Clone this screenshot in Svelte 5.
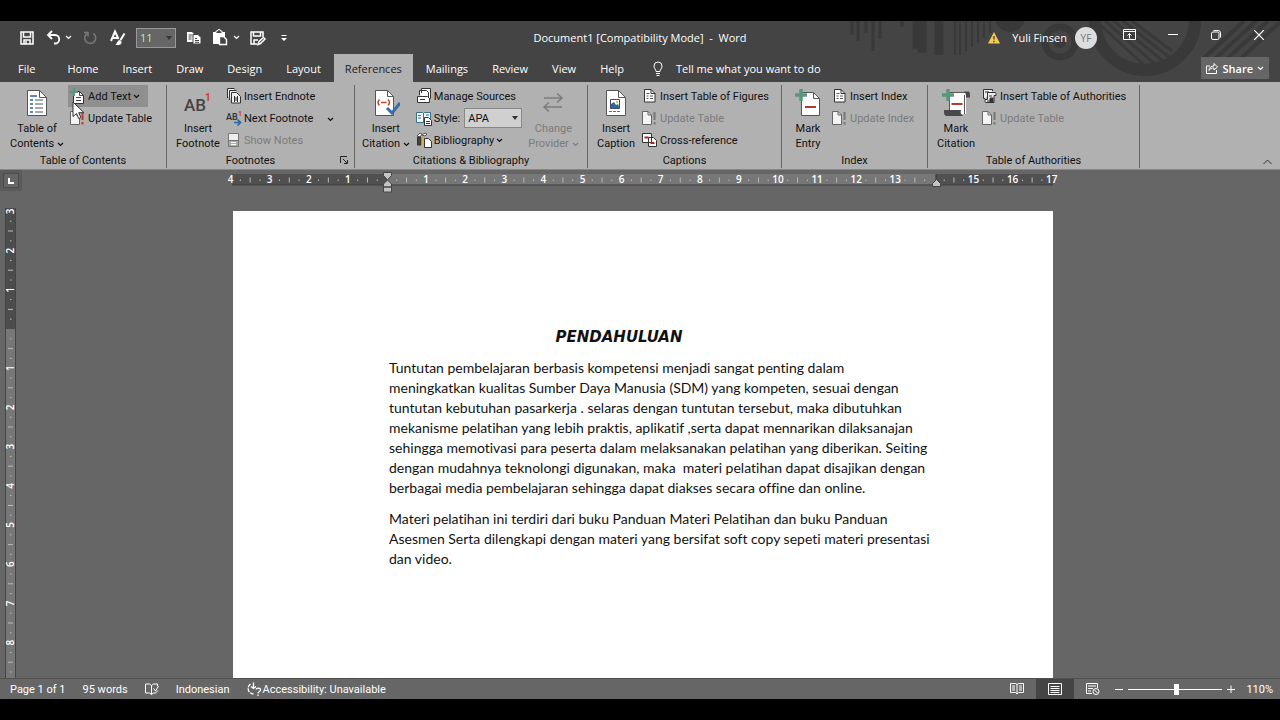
<script lang="ts">
  let zoom = 110;
  let fontSize = '11';
  let citationStyle = 'APA';

  const tabs = ['File', 'Home', 'Insert', 'Draw', 'Design', 'Layout', 'References', 'Mailings', 'Review', 'View', 'Help'];
  let activeTab = 'References';

  // one centimetre on the rulers at 110%
  const unit = 39.1;
  const left = 154;

  const hTicks: { x: number; kind: string; label: string }[] = [];
  for (let i = -16; i <= 68; i++) {
    const n = Math.abs(i / 4);
    if (i === 0 || i === 56) continue;
    const kind = i % 4 === 0 ? 'num' : i % 2 === 0 ? 'line' : 'dot';
    hTicks.push({ x: left + (i * unit) / 4, kind, label: String(n) });
  }

  const vTicks: { y: number; kind: string; label: string }[] = [];
  for (let i = -12; i <= 35; i++) {
    if (i === 0) continue;
    const kind = i % 4 === 0 ? 'num' : i % 2 === 0 ? 'line' : 'dot';
    vTicks.push({ y: 121 + (i * 39.2) / 4, kind, label: String(Math.abs(i / 4)) });
  }

  const first = [
    'Tuntutan pembelajaran berbasis kompetensi menjadi sangat penting dalam',
    'meningkatkan kualitas Sumber Daya Manusia (SDM) yang kompeten, sesuai dengan',
    'tuntutan kebutuhan pasarkerja . selaras dengan tuntutan tersebut, maka dibutuhkan',
    'mekanisme pelatihan yang lebih praktis, aplikatif ,serta dapat mennarikan dilaksanajan',
    'sehingga memotivasi para peserta dalam melaksanakan pelatihan yang diberikan. Seiting',
    'dengan mudahnya teknolongi digunakan, maka  materi pelatihan dapat disajikan dengan',
    'berbagai media pembelajaran sehingga dapat diakses secara offine dan online.'
  ];
  const second = [
    'Materi pelatihan ini terdiri dari buku Panduan Materi Pelatihan dan buku Panduan',
    'Asesmen Serta dilengkapi dengan materi yang bersifat soft copy sepeti materi presentasi',
    'dan video.'
  ];
</script>

{#snippet chevron()}
  <svg class="chevron" width="7" height="5" viewBox="0 0 7 5"><path d="M1 1l2.5 2.5L6 1" fill="none" stroke="currentColor" stroke-width="1.2" /></svg>
{/snippet}

{#snippet updateIcon(color: string)}
  <svg width="16" height="16" viewBox="0 0 16 16">
    <path d="M.5 1.500h5.500l3.500 3.500v9.500h-9z" fill="#f4f4f4" stroke="#666" />
    <path d="M6 1.500v3.500h3.500" fill="none" stroke="#666" />
    <path d="M12.500 2v8M12.500 12v2.500" stroke={color} stroke-width="2" />
  </svg>
{/snippet}

{#snippet pageIcon()}
  <svg width="16" height="16" viewBox="0 0 16 16">
    <path d="M2.500 1.500h6.500l4 4v8.500h-10.500z" fill="#fff" stroke="#333" />
    <path d="M9 1.500v4h4" fill="none" stroke="#333" />
    <path d="M4.500 5.500h3M4.500 8h2M8 8h3M4.500 10.500h2M8 10.500h3" stroke="#555" />
  </svg>
{/snippet}

<div class="app">
  <header>
    <svg class="decor" width="460" height="61" viewBox="0 0 460 61">
      <g stroke="#393939" fill="none">
        <path d="M32 0v14M38 0v20M46 0v12M53 0v30M60 0v18M82 0v6" stroke-width="3" />
        <path d="M97 0v28M102 0v32M119 0v34" stroke-width="9" />
        <path d="M135 0v34M140 0v34M146 0v30M152 0v26M158 0v22M164 0v17M170 0v12" stroke-width="2" />
        <circle cx="240" cy="21" r="15" stroke-width="7" />
        <circle cx="325" cy="-1" r="50" stroke-width="12" />
        <path d="M276 0l50 46M285 0l50 43M294 0l49 40M303 0l46 36M312 0l40 30" stroke-width="3" />
        <path d="M436 0l-52 48M424 0l-40 37M448 0l-50 46M460 1l-46 43" stroke-width="4" />
      </g>
      <circle cx="190" cy="-4" r="15" fill="#393939" />
      <circle cx="240" cy="21" r="6" fill="#393939" />
    </svg>

    <div class="titlebar">
      <div class="quick">
        <button aria-label="Save">
          <svg width="16" height="16" viewBox="0 0 16 16" fill="none" stroke="#fff" stroke-width="1.500"><path d="M2 2h12v12H2zM4.500 2v5h7V2M5 14v-4h6v4M7 11v3" /></svg>
        </button>
        <button class="split" aria-label="Undo">
          <svg width="16" height="16" viewBox="0 0 16 16" fill="none" stroke="#fff" stroke-width="1.800"><path d="M7 1L3 5l4 4M3.500 5H10a4 4 0 0 1 0 8.500H9" /></svg>
          {@render chevron()}
        </button>
        <button aria-label="Redo" disabled>
          <svg width="16" height="16" viewBox="0 0 16 16" fill="none" stroke="#777" stroke-width="1.600"><path d="M5 3.500a5.500 5.500 0 1 0 6.500 0M2 2.500h4v4" /></svg>
        </button>
        <button aria-label="Format">
          <svg width="18" height="17" viewBox="0 0 18 17" fill="none" stroke="#fff" stroke-width="2"><path d="M3 12L7 2.500 10.500 10M5 9h5M16.500 4.500l-4 6.500" /><path d="M7 16c2 0 2-5 5-5 3 1.500 1.500 5-1.500 5z" fill="#fff" stroke="none" /></svg>
        </button>
        <label class="size">
          <select bind:value={fontSize} aria-label="Font size"><option>11</option></select>
        </label>
        <button aria-label="Copy">
          <svg width="16" height="16" viewBox="0 0 16 16"><path d="M1 2h5l2 2v8H1z" fill="#fff" /><path d="M7 4.500h5l3 3v6.500H7z" fill="#fff" stroke="#444" /><path d="M2.500 5h4M2.500 7h3M2.500 9h3M9 8.500h2M9 10.500h4M9 12.300h4" stroke="#444" /></svg>
        </button>
        <button class="split" aria-label="Paste">
          <svg width="17" height="17" viewBox="0 0 17 17"><path d="M1 3h12v5h-4v7H1z" fill="#fff" /><path d="M4 3.500V2h1.500a1.500 1.500 0 0 1 3 0H10v2.500H4z" fill="#444" stroke="#fff" /><path d="M7.500 7.500h4l3 3v5h-7z" fill="#444" stroke="#fff" stroke-width="1.400" /></svg>
          {@render chevron()}
        </button>
        <button aria-label="Save as">
          <svg width="17" height="16" viewBox="0 0 17 16" fill="none" stroke="#fff" stroke-width="1.500"><path d="M7 14H1V2h12v5M3.500 2v4h7V2M4 14v-4h4M8 14.500l1-3 4.500-4 1.500 1.500-4.500 4.500z" /></svg>
        </button>
        <button class="more" aria-label="Customize">
          <svg width="8" height="8" viewBox="0 0 8 8"><path d="M1.500 1.500h5" stroke="#fff" /><path d="M1 4h6L4 7z" fill="#fff" /></svg>
        </button>
      </div>

      <div class="doc-title">Document1 [Compatibility Mode]&nbsp; -&nbsp; Word</div>

      <div class="window">
        <svg width="12" height="12" viewBox="0 0 12 12"><path d="M6 0l6 11.500H0z" fill="#f3ca52" /><path d="M6 4v3.500M6 8.700v1.500" stroke="#333" stroke-width="1.200" /></svg>
        <span class="user">Yuli Finsen</span>
        <span class="avatar">YF</span>
        <div class="controls">
          <button aria-label="Ribbon display">
            <svg width="13" height="11" viewBox="0 0 13 11" fill="none" stroke="#fff"><path d="M.5.5h12v10H.5zM.5 2.500h12M6.500 9.500v-5M4.500 6.500l2-2 2 2" /></svg>
          </button>
          <button aria-label="Minimize">
            <svg width="10" height="10" viewBox="0 0 10 10"><path d="M0 4.500h10" stroke="#fff" /></svg>
          </button>
          <button aria-label="Restore">
            <svg width="10" height="10" viewBox="0 0 10 10" fill="none" stroke="#fff"><rect x=".5" y="2" width="7.500" height="7.500" rx="1.500" /><path d="M2.500.5H7a2.500 2.500 0 0 1 2.500 2.500v4.500" /></svg>
          </button>
          <button aria-label="Close">
            <svg width="10" height="10" viewBox="0 0 10 10"><path d="M0 0l10 10M10 0L0 10" stroke="#fff" stroke-width="1.200" /></svg>
          </button>
        </div>
      </div>
    </div>

    <nav class="tabs">
      {#each tabs as tab}
        <button class="tab" class:active={tab === activeTab} on:click={() => (activeTab = tab)}>{tab}</button>
      {/each}
      <button class="tell">
        <svg width="10" height="15" viewBox="0 0 10 15" fill="none" stroke="#fff"><path d="M3 10.500c0-2-2-3-2-5.500a4 4 0 0 1 8 0c0 2.500-2 3.500-2 5.500zM3 12.500h4M3.500 14.500h3" /></svg>
        Tell me what you want to do
      </button>
      <button class="share">
        <svg width="12" height="12" viewBox="0 0 12 12" fill="none" stroke="#fff"><path d="M4 4H.5v7.500h10V8M3 8.500c0-3 2-4.500 5-4.500V1.500L11.500 5 8 8V6c-2.500 0-4 .5-5 2.500z" /></svg>
        Share
        {@render chevron()}
      </button>
    </nav>
  </header>

  <div class="ribbon">
    <section class="group toc">
      <div class="tools">
        <button class="big">
          <svg width="22" height="28" viewBox="0 0 22 28">
            <path d="M1.500 1.500h12l7 7v18h-19z" fill="#fff" stroke="#555" /><path d="M13.500 1.500v7h7" fill="none" stroke="#555" />
            <path d="M4 7h7M4 11h3M4 15h3M4 19h3M4 23h3" stroke="#2b5f9c" stroke-width="1.500" /><path d="M9 11h8M9 15h8M9 19h8M9 23h8" stroke="#456" />
          </svg>
          <span>Table of<br />Contents {@render chevron()}</span>
        </button>
        <div class="stack">
          <button class="small hover">
            <svg width="16" height="16" viewBox="0 0 16 16"><path d="M3.500 3.500h6l4 4v8h-10z" fill="#fff" stroke="#333" /><path d="M9.500 3.500v4h4M6 9.500h5M6 12.500h5" fill="none" stroke="#444" /><path d="M4 0v8M0 4h8" stroke="#4f9a7c" stroke-width="2" /></svg>
            Add Text {@render chevron()}
          </button>
          <button class="small">{@render updateIcon('#c43a2b')} Update Table</button>
          <svg class="cursor" width="13" height="19" viewBox="0 0 13 19"><path d="M1 1v14.500l3.500-3 2.200 5 2.200-1-2.200-4.800H12z" fill="#fff" stroke="#333" /></svg>
        </div>
      </div>
      <h2>Table of Contents</h2>
    </section>

    <section class="group foot">
      <div class="tools">
        <button class="big">
          <svg width="28" height="28" viewBox="0 0 28 28"><text x="0" y="22" font-size="17" font-weight="500" fill="#444">AB</text><text x="21" y="12" font-size="10" font-weight="700" fill="#c9402f">1</text></svg>
          <span>Insert<br />Footnote</span>
        </button>
        <div class="stack">
          <button class="small">
            <svg width="16" height="16" viewBox="0 0 16 16" fill="#eee" stroke="#333"><path d="M1.500 10V.5h7M3.500 12V2.500h7M5.500 14V4.500h5l4 4v6.500h-9z" /><path d="M8.500 8v6M11.500 8v6M10 9v4" /></svg>
            Insert Endnote
          </button>
          <button class="small">
            <svg width="16" height="16" viewBox="0 0 16 16"><text x="0" y="10" font-size="9" font-weight="600" fill="#333">AB</text><text x="12" y="6" font-size="7" font-weight="700" fill="#c9402f">1</text><path d="M8 12.500h6M11.500 9.500l3 3-3 3" fill="none" stroke="#2268a8" stroke-width="1.600" /></svg>
            Next Footnote <i>{@render chevron()}</i>
          </button>
          <button class="small" disabled>
            <svg width="16" height="16" viewBox="0 0 16 16"><path d="M2.500 1.500h10v13h-10z" fill="#eee" stroke="#777" /><path d="M2.500 8.500h10v6h-10z" fill="#aaa" stroke="#777" /><path d="M5 10.500h5M5 12.500h5" stroke="#fff" /></svg>
            Show Notes
          </button>
        </div>
      </div>
      <h2>Footnotes</h2>
      <button class="launcher" aria-label="Footnote settings">
        <svg width="8" height="8" viewBox="0 0 8 8" fill="none" stroke="#222"><path d="M.5 7V.5H7M3 3l4 4M7.500 4v3.500H4" /></svg>
      </button>
    </section>

    <section class="group cite">
      <div class="tools">
        <button class="big">
          <svg width="28" height="28" viewBox="0 0 28 28"><path d="M3.500 1.500h12l6 6v19h-18z" fill="#fff" stroke="#555" /><path d="M15.500 1.500v6h6" fill="none" stroke="#555" /><path d="M7.500 10.500c-2 2-2 4 0 6M16 10.500c2 2 2 4 0 6M9 13.500h5.500" fill="none" stroke="#c33f30" stroke-width="1.500" /><path d="M15 19l5 5 8-10" fill="none" stroke="#3a6ea5" stroke-width="3" /></svg>
          <span>Insert<br />Citation {@render chevron()}</span>
        </button>
        <div class="stack">
          <button class="small">
            <svg width="16" height="16" viewBox="0 0 16 16" fill="#fff" stroke="#333"><path d="M5.500 5V.5h9v10H13M3.500 7V2.500h7l2 2V11" /><path d="M1.500 8.500h10l2 2v4h-12z" /><path d="M4 11.500h5" /></svg>
            Manage Sources
          </button>
          <label class="small">
            <svg width="16" height="16" viewBox="0 0 16 16"><path d="M.5 2.500h6l1 1 1-1h6v10H.5z" fill="#eef6fa" stroke="#3a6f90" /><path d="M7.500 3v9M2 5.500h3M2 8h3M10 5h3" stroke="#3a6f90" /><path d="M8.500 7.500h4l3 3v5h-7z" fill="#fff" stroke="#333" /><path d="M10 11.500h4M10 13.500h4" stroke="#333" /></svg>
            Style:
            <span class="pick"><select bind:value={citationStyle}><option>APA</option></select></span>
          </label>
          <button class="small">
            <svg width="16" height="16" viewBox="0 0 16 16"><path d="M1 4l3-3 2 1-2 3zM6 3l3-2 2 1-2 2z" fill="#fff" stroke="#555" /><path d="M1.500 5v8H5V5z" fill="#444" stroke="#333" /><path d="M5.500 5h6v9h-6z" fill="#d9ad52" /><path d="M8.500 6.500h4l3 3v6h-7z" fill="#fff" stroke="#333" /></svg>
            Bibliography {@render chevron()}
          </button>
        </div>
        <button class="big" disabled>
          <svg width="28" height="28" viewBox="0 0 28 28" fill="none" stroke="#7c7c7c" stroke-width="1.600"><path d="M5 9h17M18 4.500l5 4.500-5 4.500M23 18H6M10 13.500L5 18l5 4.500" /></svg>
          <span>Change<br />Provider {@render chevron()}</span>
        </button>
      </div>
      <h2>Citations &amp; Bibliography</h2>
    </section>

    <section class="group capt">
      <div class="tools">
        <button class="big">
          <svg width="22" height="28" viewBox="0 0 22 28"><path d="M1.500 1.500h12l7 7v18h-19z" fill="#fff" stroke="#555" /><path d="M13.500 1.500v7h7" fill="none" stroke="#555" /><path d="M5.500 10.500h9v9h-9z" fill="#fff" stroke="#447" /><path d="M6 19v-4l3-2 2 3 2-1 1.500 4z" fill="#2b6b93" /><circle cx="12" cy="13" r="1" fill="#d4a13a" /><path d="M4 22.500h11" stroke="#b44" stroke-dasharray="3 1" /></svg>
          <span>Insert<br />Caption</span>
        </button>
        <div class="stack">
          <button class="small">{@render pageIcon()} Insert Table of Figures</button>
          <button class="small" disabled>{@render updateIcon('#777')} Update Table</button>
          <button class="small">
            <svg width="16" height="16" viewBox="0 0 16 16" fill="#fff" stroke="#333"><path d="M.5 1.500h9v9h-9zM6.500 5.500h5l3 3v6h-8z" /><path d="M2.500 5.500h4M8.500 11h4" stroke="#b32020" stroke-width="2" /></svg>
            Cross-reference
          </button>
        </div>
      </div>
      <h2>Captions</h2>
    </section>

    <section class="group index">
      <div class="tools">
        <button class="big">
          <svg width="28" height="28" viewBox="0 0 28 28"><path d="M7.500 3.500h12l6 6v17h-18z" fill="#fff" stroke="#555" /><path d="M19.500 3.500v6h6" fill="none" stroke="#555" /><path d="M11 18h11" stroke="#b23a2c" stroke-width="2" /><path d="M7 0v12M1 6h12" stroke="#57987d" stroke-width="3.500" /></svg>
          <span>Mark<br />Entry</span>
        </button>
        <div class="stack">
          <button class="small">{@render pageIcon()} Insert Index</button>
          <button class="small" disabled>{@render updateIcon('#777')} Update Index</button>
        </div>
      </div>
      <h2>Index</h2>
    </section>

    <section class="group auth">
      <div class="tools">
        <button class="big">
          <svg width="28" height="28" viewBox="0 0 28 28"><path d="M7 3h17v22H7z" fill="#fff" /><path d="M7.500 21V3.500H25M22.500 6v19" fill="none" stroke="#555" /><path d="M22 2.500h4c2 0 2 2 2 6h-4c0-3 0-4-2-6zM2 21h17c-1 3 0 4 2 6H5c-3 0-3-3-3-6z" fill="#484848" /><path d="M9.500 15h11" stroke="#b23a2c" stroke-width="2" /><path d="M6 0v12M0 6h12" stroke="#57987d" stroke-width="3.500" /></svg>
          <span>Mark<br />Citation</span>
        </button>
        <div class="stack">
          <button class="small">
            <svg width="16" height="16" viewBox="0 0 16 16" fill="#eee" stroke="#333"><path d="M3 10.500H1.500V1.500h9V3M3 4h4" /><path d="M5.500 4.500H13c1 0 1 1 1 3h-2v7H4c-1 0-1-1-1-3h2.500z" /><path d="M7 8h3M5 13h5" /><path d="M8 10h3v4H8z" fill="#333" /></svg>
            Insert Table of Authorities
          </button>
          <button class="small" disabled>{@render updateIcon('#777')} Update Table</button>
        </div>
      </div>
      <h2>Table of Authorities</h2>
    </section>

    <button class="collapse" aria-label="Collapse ribbon">
      <svg width="9" height="6" viewBox="0 0 9 6" fill="none" stroke="#333"><path d="M.5 5l4-4 4 4" /></svg>
    </button>
  </div>

  <main>
    <div class="top">
      <button class="corner" aria-label="Tab stop"><span></span></button>
      <svg class="hruler" width="836" height="24" viewBox="-8 0 836 24">
        <rect x="-1" y="4" width="821" height="11" fill="#505050" />
        <rect x="154" y="4" width="549" height="11" fill="#777" />
        <path d="M-1 15h821" stroke="#3f3f3f" />
        {#each hTicks as t}
          {#if t.kind === 'num'}
            <text x={t.x} y="13" text-anchor="middle">{t.label}</text>
          {:else if t.kind === 'line'}
            <path d="M{t.x} 7.500v5" stroke="#bbb" />
          {:else}
            <path d="M{t.x} 9.500v1.500" stroke="#bbb" />
          {/if}
        {/each}
        <path d="M150.500 2.500h8v3l-4 4.500-4-4.500zM154.500 10l4 4v3h-8v-3zM150.500 17h8v5h-8z" fill="#c4c4c4" stroke="#444" />
        <path d="M703 4v6" stroke="#333" /><path d="M703.500 9.500l4 4v3h-8v-3z" fill="#c4c4c4" stroke="#444" />
      </svg>
    </div>
    <div class="work">
      <div class="vbox">
        <svg class="vruler" width="18" height="900" viewBox="-5 -5 18 900">
          <rect x="0" y="0" width="11" height="121" fill="#4c4c4c" />
          <rect x="0" y="121" width="11" height="779" fill="#777" />
          <path d="M.5 0v900M10.500 0v900" stroke="#444" />
          {#each vTicks as t}
            {#if t.kind === 'num'}
              <text transform="translate(9 {t.y}) rotate(-90)" text-anchor="middle">{t.label}</text>
            {:else if t.kind === 'line'}
              <path d="M3 {t.y}h5" stroke="#bbb" />
            {:else}
              <path d="M5 {t.y}h1.500" stroke="#bbb" />
            {/if}
          {/each}
        </svg>
      </div>
      <article class="page">
        <h1>PENDAHULUAN</h1>
        <p>{#each first as line}<span>{line}</span>{/each}</p>
        <p>{#each second as line}<span>{line}</span>{/each}</p>
      </article>
    </div>
  </main>

  <footer>
    <button>Page 1 of 1</button>
    <button>95 words</button>
    <button aria-label="Proofing">
      <svg width="14" height="13" viewBox="0 0 14 13" fill="none" stroke="#fff"><path d="M6.500 2.500l-2-1.500H.5v9h4l2 1.500 2-1.500h2M6.500 2.500v9M6.500 2.500l2-1.500h4v2M8.500 5.500l2 2.500 3-5M10 10.500l3-3" /></svg>
    </button>
    <button>Indonesian</button>
    <button>
      <svg width="16" height="14" viewBox="0 0 16 14" fill="none" stroke="#fff" stroke-width="1.300"><path d="M3.500 2a5.500 5.500 0 0 0 3 10" stroke-dasharray="4 1" /><path d="M6.500.5v6M4 4.500l2.500 2 2.500-2M9 7.500c1-2 5-1.500 4.500.5 0 1.500-2.500 1.500-2.500 3.500M11 12.500v1.500" /></svg>
      Accessibility: Unavailable
    </button>
    <div class="right">
      <div class="views">
        <button aria-label="Read mode"><svg width="14" height="12" viewBox="0 0 14 12" fill="none" stroke="#fff"><path d="M7 1.500L5.500.5h-5v9h5L7 11l1.500-1.500h5v-9h-5zM7 1v10M2 3h3M2 5h3M2 7h3M9 3h3M9 5h3M9 7h3" /></svg></button>
        <button class="on" aria-label="Print layout"><svg width="14" height="12" viewBox="0 0 14 12" fill="none" stroke="#fff"><path d="M.5.5h13v11H.5zM2.500 3.500h9M2.500 5.500h9M2.500 7.500h9M2.500 9.500h9" /></svg></button>
        <button aria-label="Web layout"><svg width="14" height="12" viewBox="0 0 14 12" fill="none" stroke="#fff"><path d="M6 10.500H.5V.5h11V5M2 3h8M2 5.500h5M2 8h3" /><circle cx="10" cy="8.500" r="3" /><path d="M8.500 7l3 3" /></svg></button>
      </div>
      <div class="zoom">
        <button aria-label="Zoom out"><svg width="8" height="8" viewBox="0 0 8 8"><path d="M0 4.500h8" stroke="#fff" /></svg></button>
        <input type="range" min="10" max="206" bind:value={zoom} aria-label="Zoom" />
        <button aria-label="Zoom in"><svg width="8" height="8" viewBox="0 0 8 8"><path d="M0 4.500h8M4 .5v8" stroke="#fff" /></svg></button>
        <span class="percent">{zoom}%</span>
      </div>
    </div>
  </footer>
</div>

<style>
  :global(body) {
    background: #000;
  }

  .app {
    display: flex;
    flex-direction: column;
    box-sizing: border-box;
    height: 100vh;
    padding: 21px 0;
    overflow: hidden;
    font-family: "Open Sans", "Noto Sans", sans-serif;
    font-size: 11px;
    line-height: 15px;
    color: #111;
  }

  button,
  select {
    margin: 0;
    padding: 0;
    border: 0;
    background: none;
    font: inherit;
    color: inherit;
    white-space: nowrap;
  }

  svg {
    flex: none;
  }

  header {
    position: relative;
    background: #444;
    color: #fff;
  }

  .decor {
    position: absolute;
    top: 0;
    right: 0;
  }

  .titlebar {
    position: relative;
    display: grid;
    grid-template-columns: 1fr auto 1fr;
    align-items: center;
    height: 33px;
  }

  .quick {
    display: flex;
    align-items: center;
    gap: 10px;
    padding-left: 19px;
  }

  .quick button {
    display: flex;
    align-items: center;
    gap: 4px;
  }

  .quick .more {
    margin-left: 3px;
  }

  .size {
    position: relative;
    display: flex;
  }

  .size select {
    appearance: none;
    width: 40px;
    height: 20px;
    padding-left: 3px;
    border: 1px solid #999;
    background: #666;
    color: #b5efb9;
  }

  .size::after,
  .pick::after {
    content: "";
    position: absolute;
    right: 4px;
    top: 8px;
    border: 3px solid transparent;
    border-top: 4px solid #333;
    pointer-events: none;
  }

  .window {
    display: flex;
    align-items: center;
    justify-content: flex-end;
  }

  .user {
    margin: 0 8px 0 12px;
  }

  .avatar {
    width: 22px;
    height: 22px;
    border-radius: 50%;
    background: #ddd;
    color: #777;
    font-size: 10px;
    line-height: 22px;
    text-align: center;
  }

  .controls {
    display: flex;
    margin-left: 11px;
  }

  .controls button {
    width: 43px;
    height: 30px;
    padding-bottom: 4px;
  }

  .tabs {
    position: relative;
    display: flex;
    gap: 2px;
    height: 28px;
    padding-left: 7px;
  }

  .tab {
    padding: 0 11px;
  }

  .tab:first-child {
    margin-right: 8px;
  }

  .tab.active {
    background: #b1b1b1;
    color: #222;
  }

  .tell,
  .share {
    display: flex;
    align-items: center;
  }

  .tell {
    gap: 13px;
    margin-left: 16px;
  }

  .share {
    gap: 4px;
    height: 22px;
    margin: 3px 11px 0 auto;
    padding: 0 5px;
    background: #666;
    font-weight: 600;
  }

  .ribbon {
    display: flex;
    height: 87px;
    border-bottom: 1px solid #888;
    background: #b1b1b1;
    font-family: Roboto, sans-serif;
  }

  .group {
    position: relative;
    display: flex;
    flex-direction: column;
    box-sizing: border-box;
    flex: none;
    margin: 3px 0 1px;
    border-right: 1px solid #666;
  }

  .toc { width: 167px; }
  .foot { width: 188px; }
  .cite { width: 233px; }
  .capt { width: 194px; }
  .index { width: 146px; }
  .auth { width: 212px; }

  .tools {
    display: flex;
    height: 69px;
    gap: 4px;
    padding-left: 6px;
  }

  .toc .tools {
    padding-left: 10px;
  }

  .foot .tools {
    padding-left: 9px;
  }

  .cite .tools {
    padding-left: 7px;
  }

  .capt .tools,
  .auth .tools {
    gap: 2px;
  }

  .index .tools {
    gap: 0;
    padding-left: 4px;
  }

  .big {
    display: flex;
    flex-direction: column;
    align-items: center;
    gap: 4px;
    min-width: 44px;
    padding-top: 4px;
  }

  .stack {
    position: relative;
    display: flex;
    flex-direction: column;
  }

  .small {
    display: flex;
    align-items: center;
    align-self: flex-start;
    gap: 2px;
    height: 22px;
    padding: 0 2px;
    white-space: nowrap;
  }

  .small.hover {
    padding-right: 8px;
    background: #8f8f8f;
  }

  button:disabled {
    color: #7b7b7b;
  }

  .small i {
    margin-left: 12px;
  }

  .pick {
    position: relative;
    display: flex;
    margin-left: 2px;
  }

  .pick select {
    appearance: none;
    width: 58px;
    height: 20px;
    padding-left: 3px;
    border: 1px solid #888;
    background: #d0d0d0;
  }

  h2 {
    margin: 0;
    font-size: 11px;
    font-weight: 400;
    line-height: 15px;
    text-align: center;
  }

  .foot h2 {
    padding-right: 20px;
  }

  .launcher {
    position: absolute;
    right: 6px;
    bottom: 0;
  }

  .collapse {
    align-self: flex-end;
    margin: 0 8px 0 auto;
  }

  .cursor {
    position: absolute;
    left: 4px;
    top: 16px;
  }

  main {
    display: flex;
    flex: 1;
    flex-direction: column;
    min-height: 0;
    background: #666;
  }

  .top {
    display: grid;
    grid-template-columns: 23px 1fr;
    height: 33px;
    flex: none;
  }

  .corner {
    width: 22px;
    height: 21px;
    border: 3px solid #5b5b5b;
    outline: 1px solid #4c4c4c;
    outline-offset: -4px;
    display: grid;
    place-items: center;
  }

  .corner span {
    width: 4px;
    height: 4px;
    border-left: 2px solid #fff;
    border-bottom: 2px solid #fff;
  }

  .hruler {
    justify-self: center;
    margin-right: 17px;
  }

  .hruler text,
  .vruler text {
    fill: #fff;
    font-size: 10px;
    font-weight: 600;
  }

  .work {
    display: grid;
    grid-template-columns: 18px 1fr 12px;
    flex: 1;
    min-height: 0;
  }

  .vbox {
    overflow: hidden;
  }

  .page {
    justify-self: center;
    box-sizing: border-box;
    width: 820px;
    margin-top: 8px;
    padding: 116px 116px 0 156px;
    overflow: hidden;
    background: #fff;
    color: #111;
    font-family: Lato, sans-serif;
    font-size: 14px;
    font-variant-ligatures: none;
    line-height: 20px;
  }

  h1 {
    margin: 0 88px 11px 0;
    font-family: "DejaVu Sans", sans-serif;
    font-size: 15px;
    font-weight: 700;
    font-style: italic;
    line-height: 20px;
    text-align: center;
  }

  p {
    margin: 0 0 11px;
  }

  p span {
    display: block;
    white-space: pre;
  }

  footer {
    display: flex;
    align-items: center;
    gap: 17px;
    height: 20px;
    padding-left: 10px;
    border-top: 1px solid #505050;
    background: #666;
    color: #fff;
    font-family: Roboto, sans-serif;
  }

  footer button {
    display: flex;
    align-items: center;
  }

  .right {
    display: flex;
    gap: 3px;
    margin-left: auto;
  }

  .views {
    display: flex;
  }

  .views button {
    justify-content: center;
    width: 38px;
    height: 20px;
  }

  .views .on {
    background: #444;
  }

  .zoom {
    display: flex;
    align-items: center;
    gap: 5px;
    padding-right: 7px;
  }

  .zoom input {
    appearance: none;
    width: 94px;
    height: 12px;
    margin: 0;
    background: linear-gradient(#fff, #fff) center / 100% 1px no-repeat;
  }

  .zoom input::-webkit-slider-thumb {
    appearance: none;
    width: 5px;
    height: 11px;
    background: #fff;
  }

  .percent {
    margin-left: 6px;
  }
</style>
